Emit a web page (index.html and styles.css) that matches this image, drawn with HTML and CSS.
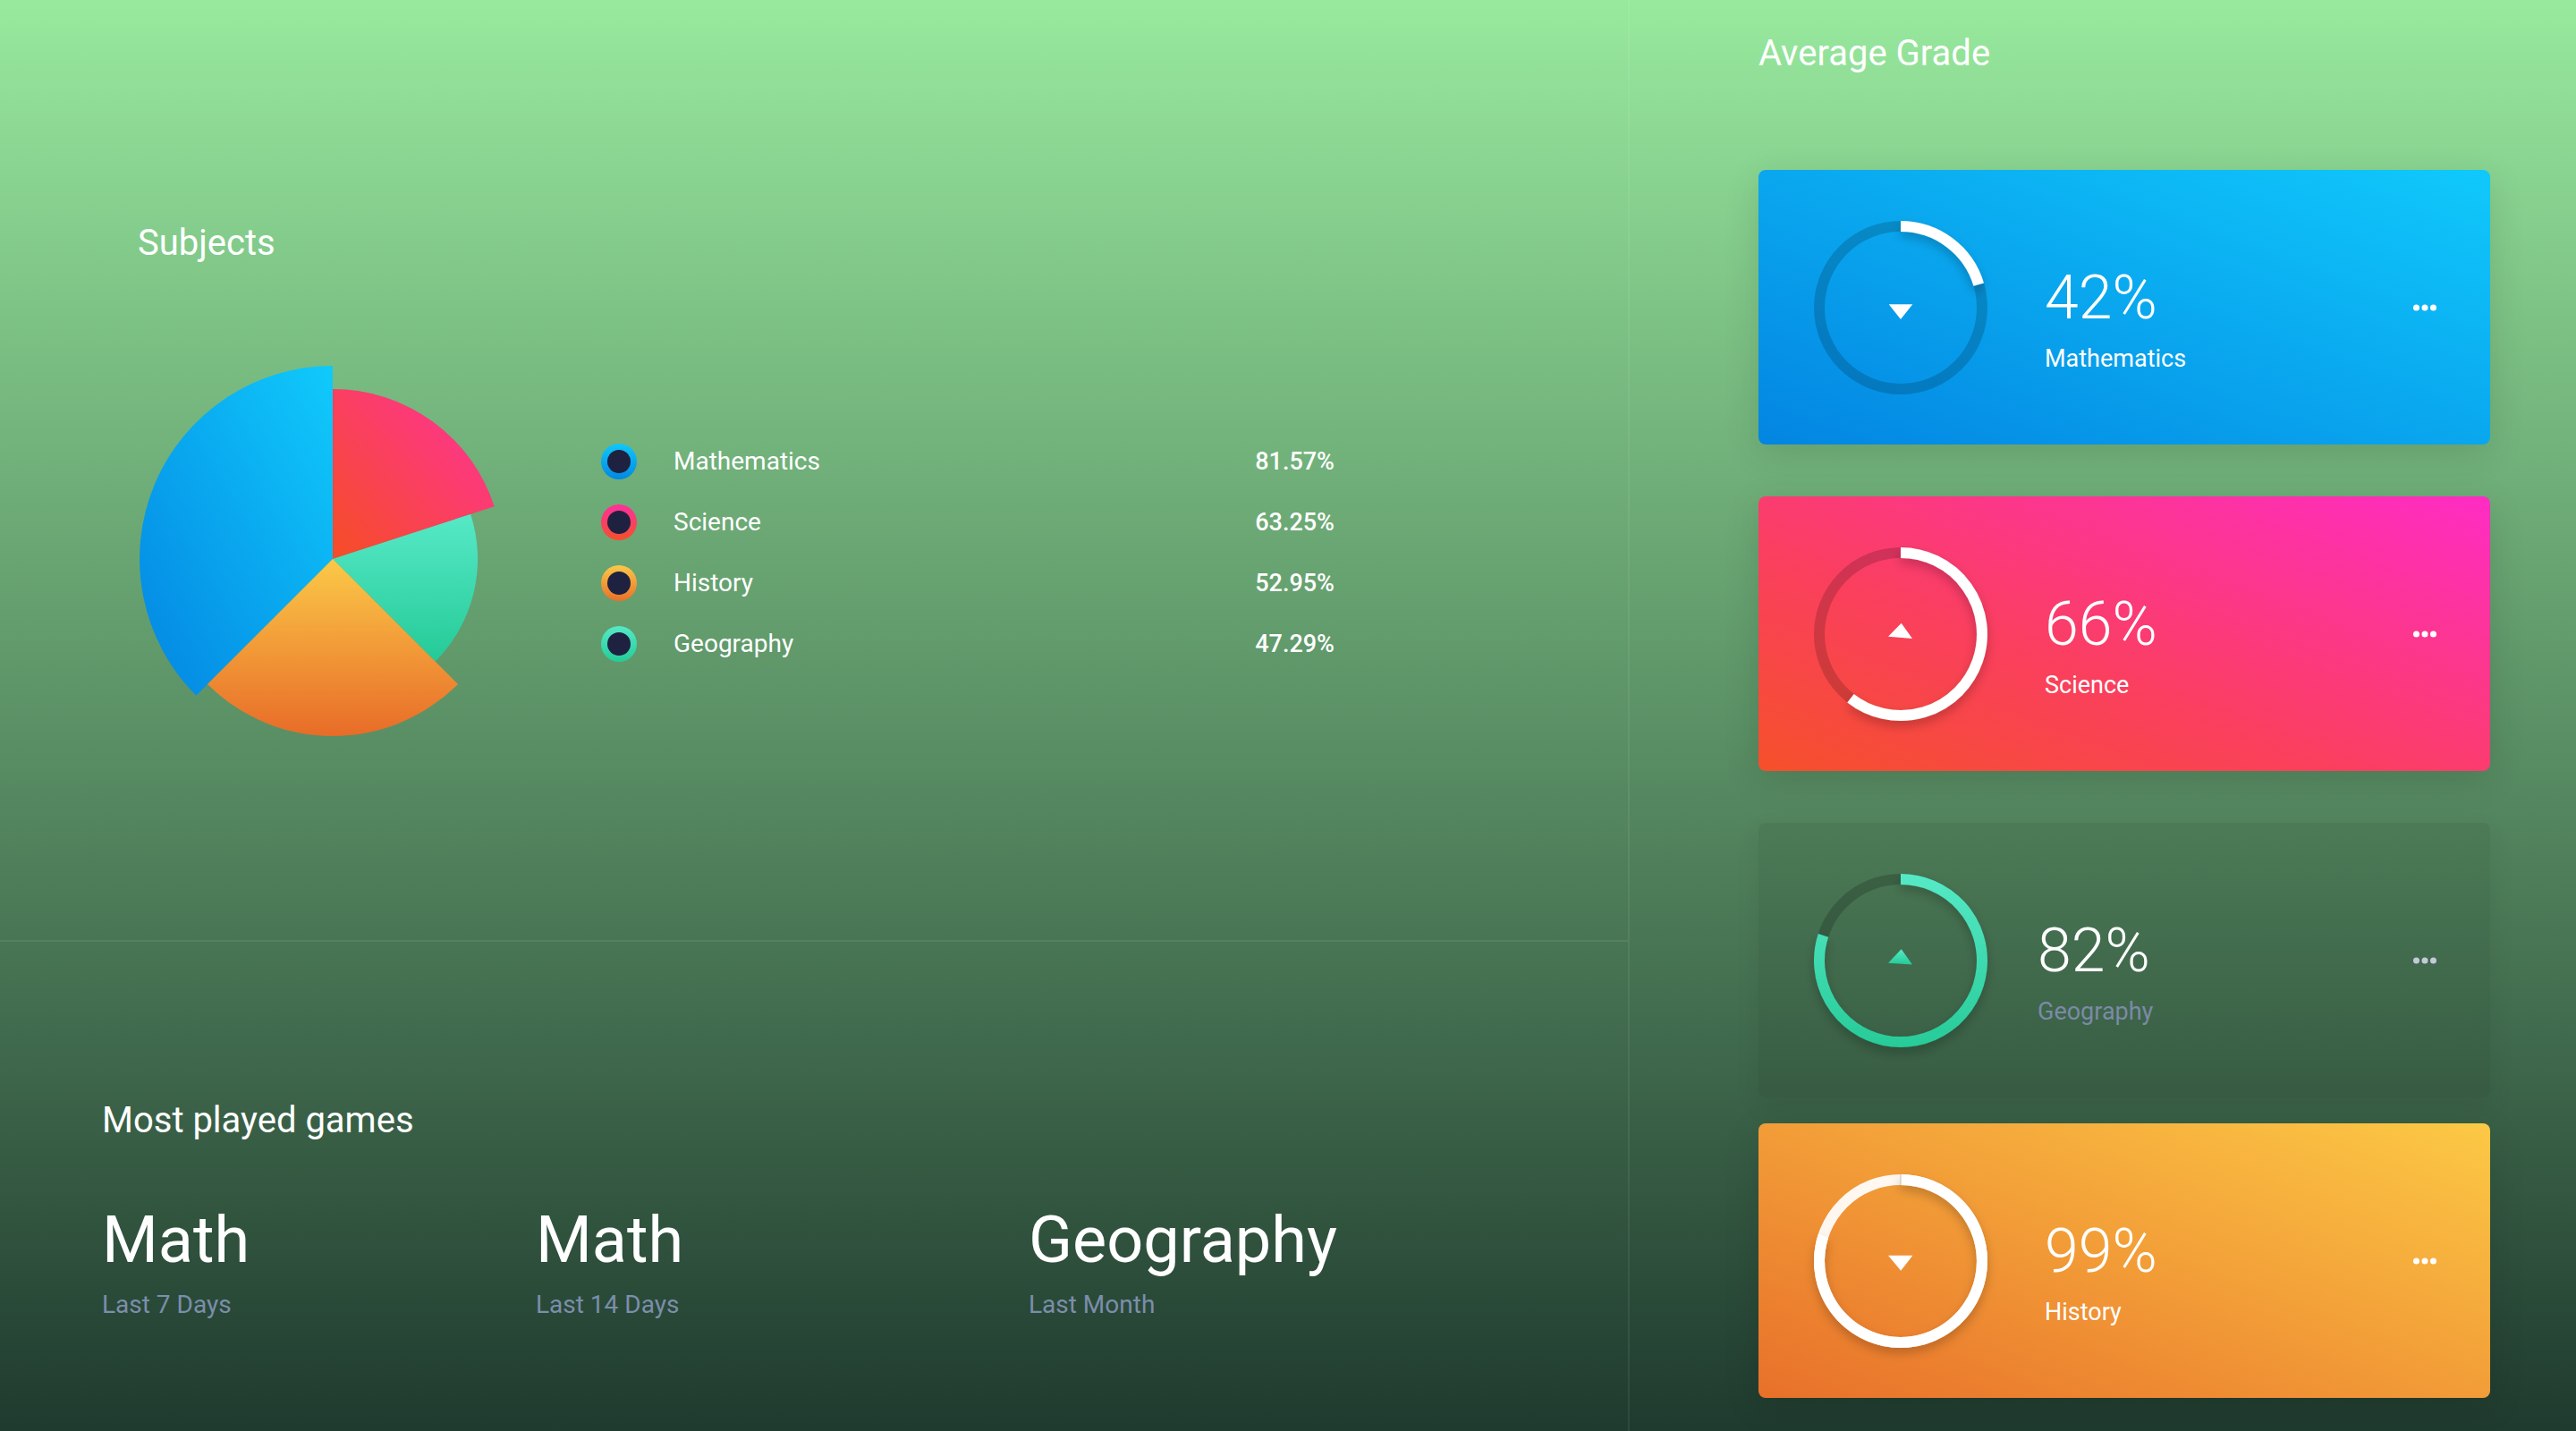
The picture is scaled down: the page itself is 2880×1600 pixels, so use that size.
FILE: index.html
```html
<!DOCTYPE html>
<html lang="en">
<head>
<meta charset="utf-8">
<title>Dashboard</title>
<link rel="stylesheet" href="styles.css">
</head>
<body>
<svg class="defs" width="0" height="0" aria-hidden="true">
  <defs>
    <linearGradient id="gBlue" x1="1" y1="0" x2="0" y2="1">
      <stop offset="0" stop-color="#10cafb"/>
      <stop offset="1" stop-color="#0385e2"/>
    </linearGradient>
    <linearGradient id="gRed" x1="1" y1="0" x2="0" y2="1">
      <stop offset="0" stop-color="#ff319e"/>
      <stop offset="1" stop-color="#f54d24"/>
    </linearGradient>
    <linearGradient id="gTeal" x1="0" y1="0" x2="0" y2="1">
      <stop offset="0" stop-color="#56e9c7"/>
      <stop offset="1" stop-color="#25ca97"/>
    </linearGradient>
    <linearGradient id="gOrange" x1="0" y1="0" x2="0" y2="1">
      <stop offset="0" stop-color="#fbc948"/>
      <stop offset="1" stop-color="#e86c28"/>
    </linearGradient>
    <linearGradient id="gTealRing" gradientUnits="userSpaceOnUse" x1="0" y1="0" x2="0" y2="194">
      <stop offset="0" stop-color="#56e9c7"/>
      <stop offset="1" stop-color="#27cb98"/>
    </linearGradient>
    <filter id="arcShadow" x="-20%" y="-20%" width="140%" height="140%">
      <feDropShadow dx="0" dy="6" stdDeviation="6" flood-color="#000" flood-opacity="0.22"/>
    </filter>
  </defs>
</svg>

<div class="app">
  <section class="left">
    <div class="subjects">
      <h2 class="title">Subjects</h2>
      <div class="chart-row">
        <svg class="pie" viewBox="0 0 436 436">
          <path d="M218,218 L65.3,370.7 A216,216 0 0 1 218,2 Z" fill="url(#gBlue)"/>
          <path d="M218,218 L218,28 A190,190 0 0 1 398.7,159.3 Z" fill="url(#gRed)"/>
          <path d="M218,218 L372.1,167.9 A162,162 0 0 1 332.6,332.6 Z" fill="url(#gTeal)"/>
          <path d="M218,218 L358,358 A198,198 0 0 1 78,358 Z" fill="url(#gOrange)"/>
        </svg>
        <ul class="legend">
          <li class="legend-row"><span class="dot dot-blue"></span><span class="legend-label">Mathematics</span><span class="legend-value">81.57%</span></li>
          <li class="legend-row"><span class="dot dot-red"></span><span class="legend-label">Science</span><span class="legend-value">63.25%</span></li>
          <li class="legend-row"><span class="dot dot-orange"></span><span class="legend-label">History</span><span class="legend-value">52.95%</span></li>
          <li class="legend-row"><span class="dot dot-teal"></span><span class="legend-label">Geography</span><span class="legend-value">47.29%</span></li>
        </ul>
      </div>
    </div>
    <div class="games">
      <h2 class="title">Most played games</h2>
      <div class="games-grid">
        <div class="game"><div class="game-name">Math</div><div class="game-period">Last 7 Days</div></div>
        <div class="game"><div class="game-name">Math</div><div class="game-period">Last 14 Days</div></div>
        <div class="game"><div class="game-name">Geography</div><div class="game-period">Last Month</div></div>
      </div>
    </div>
  </section>

  <section class="right">
    <h2 class="title">Average Grade</h2>
    <div class="cards">
      <article class="card card-blue">
        <svg class="ring" viewBox="0 0 194 194">
          <circle cx="97" cy="97" r="91" fill="none" stroke-width="12" class="track"/>
          <path d="M97,6 A91,91 0 0 1 184.25,71.16" fill="none" stroke="#fff" stroke-width="12" filter="url(#arcShadow)"/>
          <polygon points="83.7,93.3 110.3,93.3 97,110" fill="#fff"/>
        </svg>
        <div class="card-text">
          <div class="pct">42%</div>
          <div class="subj">Mathematics</div>
        </div>
        <svg class="more" viewBox="0 0 26 8"><circle cx="3.5" cy="4" r="3.5"/><circle cx="13" cy="4" r="3.5"/><circle cx="22.5" cy="4" r="3.5"/></svg>
      </article>

      <article class="card card-red">
        <svg class="ring" viewBox="0 0 194 194">
          <circle cx="97" cy="97" r="91" fill="none" stroke-width="12" class="track"/>
          <path d="M97,6 A91,91 0 1 1 40.97,168.71" fill="none" stroke="#fff" stroke-width="12" filter="url(#arcShadow)"/>
          <polygon points="97.7,84.7 110,102 83,99.7" fill="#fff"/>
        </svg>
        <div class="card-text">
          <div class="pct">66%</div>
          <div class="subj">Science</div>
        </div>
        <svg class="more" viewBox="0 0 26 8"><circle cx="3.5" cy="4" r="3.5"/><circle cx="13" cy="4" r="3.5"/><circle cx="22.5" cy="4" r="3.5"/></svg>
      </article>

      <article class="card card-geo">
        <svg class="ring" viewBox="0 0 194 194">
          <circle cx="97" cy="97" r="91" fill="none" stroke-width="12" class="track"/>
          <path d="M97,6 A91,91 0 1 1 10.45,68.88" fill="none" stroke="url(#gTealRing)" stroke-width="12" filter="url(#arcShadow)"/>
          <polygon points="97.7,84.2 110,101.5 83,99.8" fill="url(#gTeal)"/>
        </svg>
        <div class="card-text">
          <div class="pct">82%</div>
          <div class="subj">Geography</div>
        </div>
        <svg class="more" viewBox="0 0 26 8"><circle cx="3.5" cy="4" r="3.5"/><circle cx="13" cy="4" r="3.5"/><circle cx="22.5" cy="4" r="3.5"/></svg>
      </article>

      <article class="card card-orange">
        <svg class="ring" viewBox="0 0 194 194">
          <circle cx="97" cy="97" r="91" fill="none" stroke-width="12" class="track"/>
          <path d="M97,6 A91,91 0 1 1 10.45,68.88" fill="none" stroke="#fff" stroke-width="12" filter="url(#arcShadow)"/>
          <line x1="97" y1="0" x2="97" y2="12" stroke="rgba(160,110,60,0.45)" stroke-width="1"/>
          <polygon points="83,90.7 110.4,90.7 97.2,107.7" fill="#fff"/>
        </svg>
        <div class="card-text">
          <div class="pct">99%</div>
          <div class="subj">History</div>
        </div>
        <svg class="more" viewBox="0 0 26 8"><circle cx="3.5" cy="4" r="3.5"/><circle cx="13" cy="4" r="3.5"/><circle cx="22.5" cy="4" r="3.5"/></svg>
      </article>
    </div>
  </section>
</div>
</body>
</html>
```

FILE: styles.css
```css
html, body {
  margin: 0;
  padding: 0;
}

body {
  width: 2880px;
  height: 1600px;
  overflow: hidden;
  background: linear-gradient(180deg, #98e99e 0%, #1f3a2e 100%);
  font-family: Roboto, "Noto Sans", "Liberation Sans", sans-serif;
  color: #fff;
}

.defs {
  position: absolute;
  width: 0;
  height: 0;
}

.app {
  display: grid;
  grid-template-columns: 1822px 1fr;
  height: 1600px;
}

.title {
  margin: 0;
  font-size: 40px;
  line-height: 48px;
  font-weight: 400;
}

/* ---------- left ---------- */
.left {
  display: flex;
  flex-direction: column;
  border-right: 2px solid rgba(255, 255, 255, 0.07);
}

.subjects {
  height: 1053px;
  box-sizing: border-box;
  padding: 248px 0 0 154px;
  border-bottom: 2px solid rgba(255, 255, 255, 0.08);
}

.chart-row {
  display: flex;
  align-items: flex-start;
  margin-top: 111px;
}

.pie {
  width: 436px;
  height: 436px;
  display: block;
  flex: none;
}

.legend {
  list-style: none;
  margin: 75px 0 0 82px;
  padding: 0;
  width: 820px;
}

.legend-row {
  display: flex;
  align-items: center;
  height: 68px;
}

.dot {
  flex: none;
  width: 40px;
  height: 40px;
  border-radius: 50%;
  display: flex;
  align-items: center;
  justify-content: center;
}

.dot::after {
  content: "";
  width: 26px;
  height: 26px;
  border-radius: 50%;
  background: #1f2140;
}

.dot-blue { background: linear-gradient(to bottom, #10c8fa, #0388e2); }
.dot-red { background: linear-gradient(to bottom, #ff2f9e, #f5502a); }
.dot-orange { background: linear-gradient(to bottom, #fbc847, #e8712a); }
.dot-teal { background: linear-gradient(to bottom, #55e9c6, #26cb98); }

.legend-label {
  margin-left: 41px;
  font-size: 28px;
  line-height: 1;
}

.legend-value {
  margin-left: auto;
  font-size: 27px;
  font-weight: 500;
  line-height: 1;
}

.games {
  padding: 176px 0 0 114px;
}

.games-grid {
  display: grid;
  grid-template-columns: 485px 551px auto;
  margin-top: 74px;
}

.game-name {
  font-size: 72px;
  line-height: 1;
  font-weight: 400;
}

.game-period {
  margin-top: 22px;
  font-size: 28px;
  line-height: 1;
  color: #7b8eab;
}

/* ---------- right ---------- */
.right {
  padding: 36px 0 0 144px;
}

.cards {
  display: flex;
  flex-direction: column;
  gap: 58px;
  margin-top: 106px;
  width: 818px;
}

.card {
  height: 307px;
  box-sizing: border-box;
  border-radius: 8px;
  display: flex;
  align-items: center;
  padding-left: 62px;
  box-shadow: 0 10px 40px rgba(0, 0, 0, 0.12);
}

.card-blue { background: linear-gradient(to top right, #0385e2, #10c9fb); }
.card-red { background: linear-gradient(to top right, #f5502a 0%, #fa3f5e 40%, #ff2cc4 100%); }
.card-geo { background: rgba(0, 0, 0, 0.07); box-shadow: 0 10px 30px rgba(0, 0, 0, 0.07); }
.card-orange { background: linear-gradient(to top right, #e8702a, #fcc945); margin-top: -29px; }

.ring {
  flex: none;
  width: 194px;
  height: 194px;
  overflow: visible;
}

.card-blue .track,
.card-red .track { stroke: rgba(0, 0, 0, 0.17); }
.card-geo .track { stroke: rgba(0, 0, 0, 0.18); }
.card-orange .track { stroke: rgba(255, 255, 255, 0.93); }

.card-text {
  align-self: flex-start;
  margin-top: 109px;
  margin-left: 64px;
}

.card-geo .card-text {
  margin-left: 56px;
}

.pct {
  font-size: 68px;
  font-weight: 300;
  line-height: 1;
}

.subj {
  margin-top: 21px;
  font-size: 27px;
  line-height: 1;
}

.card-geo .subj {
  color: #7c8aa6;
}

.more {
  flex: none;
  margin-left: auto;
  margin-right: 60px;
  width: 26px;
  height: 8px;
  fill: #fff;
}

.card-geo .more {
  fill: #c3cadb;
}
```
